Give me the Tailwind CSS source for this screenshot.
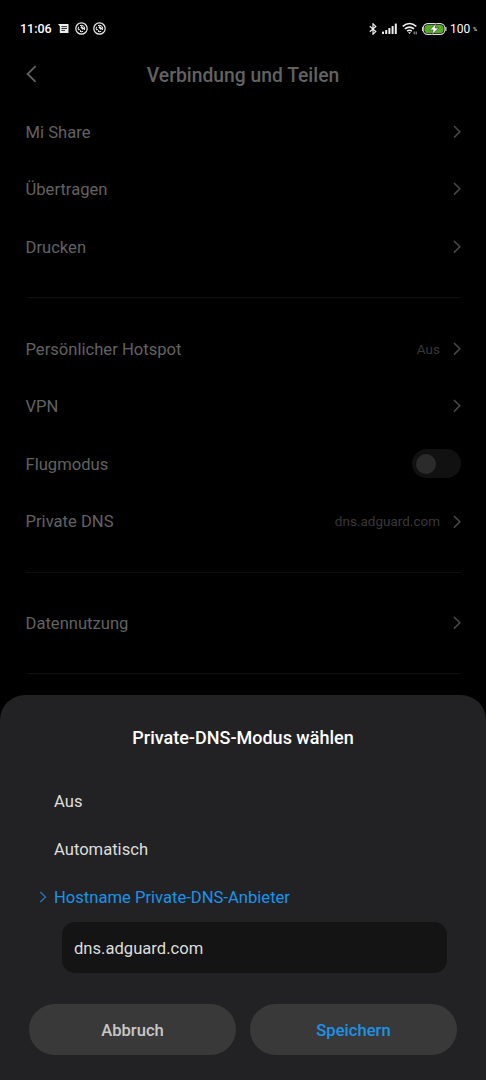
<!DOCTYPE html>
<html lang="de">
<head>
    <meta charset="UTF-8">
    <meta name="viewport" content="width=device-width, initial-scale=1.0">
    <title>Verbindung und Teilen</title>
    <script src="https://cdn.jsdelivr.net/npm/@tailwindcss/browser@4"></script>
</head>
<body class="bg-black font-['Roboto',sans-serif]">
    <div class="relative h-[1080px] w-[486px] overflow-hidden bg-black">

        <!-- Status bar -->
        <div class="flex h-[57px] items-center justify-between pl-5 pr-2 text-white">
            <div class="flex items-center">
                <span class="w-[38px] pt-[2px] text-[12.5px] font-medium leading-none">11:06</span>
                <svg class="h-[9px] w-[11px]" viewBox="0 0 11 9">
                    <path d="M0 0H10.5V9H1.8V2.2Z" fill="#eee"/>
                    <path d="M3.4 2.6H9M3.4 4.5H9M3.4 6.4H7" stroke="#000" stroke-width=".8"/>
                </svg>
                <svg class="ml-[6px] h-[13px] w-[13px]" viewBox="0 0 13 13" fill="none" stroke="#eee">
                    <circle cx="6.5" cy="6.5" r="5.7" stroke-width="1.2"/>
                    <path d="M3.6 8.2A3.3 3.3 0 0 1 3.7 4.7M5 3.6A3.3 3.3 0 0 1 9.4 8M8.2 9.3A3.3 3.3 0 0 1 5 9.4" stroke-width="1"/>
                    <path d="M6 4.6L8.6 7.2" stroke-width="2"/>
                    <path d="M3.5 6.6L6.3 9.4" stroke-width=".9"/>
                </svg>
                <svg class="ml-[5px] h-[13px] w-[13px]" viewBox="0 0 13 13" fill="none" stroke="#eee">
                    <circle cx="6.5" cy="6.5" r="5.7" stroke-width="1.2"/>
                    <path d="M3.6 8.2A3.3 3.3 0 0 1 3.7 4.7M5 3.6A3.3 3.3 0 0 1 9.4 8M8.2 9.3A3.3 3.3 0 0 1 5 9.4" stroke-width="1"/>
                    <path d="M6 4.6L8.6 7.2" stroke-width="2"/>
                    <path d="M3.5 6.6L6.3 9.4" stroke-width=".9"/>
                </svg>
            </div>
            <div class="flex items-center">
                <svg class="h-[12px] w-[8px]" viewBox="0 0 8 12" fill="none" stroke="#eee" stroke-width="1.2">
                    <path d="M.8 3.2L6.8 8.6L4 11.2V.8L6.8 3.4L.8 8.8"/>
                </svg>
                <svg class="ml-[5px] h-[11px] w-[15px]" viewBox="0 0 15 11" fill="#eee">
                    <rect x="0" y="8.5" width="2" height="2.5" rx=".5"/>
                    <rect x="3.2" y="7" width="2" height="4" rx=".5"/>
                    <rect x="6.4" y="5" width="2" height="6" rx=".5"/>
                    <rect x="9.6" y="3" width="2" height="8" rx=".5"/>
                    <rect x="12.8" y=".5" width="2" height="10.5" rx=".5"/>
                </svg>
                <svg class="ml-[5px] h-[13px] w-[16px]" viewBox="0 0 16 13" fill="none" stroke="#eee" stroke-width="1.6">
                    <path d="M.7 4.3Q7.5 -1.3 14.3 4.3M2.9 6.9Q7.5 3.2 12.1 6.9M5.1 9.2Q7.5 7.4 9.9 9.2"/>
                    <path d="M6 10.2H9L7.5 12Z" fill="#eee" stroke="none"/>
                    <path d="M12.2 9.5V12.4M14.2 9.5V12.4" stroke="#aaa" stroke-width="1"/>
                </svg>
                <svg class="ml-[4px] h-[12px] w-[25px]" viewBox="0 0 25 12">
                    <rect x="1.1" y=".6" width="21.8" height="10.8" rx="4.6" fill="#000" stroke="#ddd" stroke-width="1.1"/>
                    <path d="M.6 4V8M23.9 4V8" stroke="#ddd" stroke-width="1.2"/>
                    <rect x="2.4" y="1.9" width="19.2" height="8.2" rx="3.4" fill="#55aa25"/>
                    <path d="M14.2 .4L7.8 6.9H11.2L9.8 11.6L16.8 5H13.1Z" fill="#fff" stroke="#222" stroke-width=".5"/>
                </svg>
                <span class="ml-[3px] w-[23px] text-[12px] leading-none">100</span>
                <span class="w-[5px] pt-[3px] text-[5.5px] leading-none">%</span>
            </div>
        </div>

        <!-- Header -->
        <header class="flex h-[46px] items-start pl-[26px] pt-[5px] text-[#626262]">
            <svg class="mt-[3px] h-[18px] w-[11px]" viewBox="0 0 11 18" fill="none" stroke="currentColor" stroke-width="1.8">
                <path d="M9.6 1.2L1.6 9L9.6 16.8"/>
            </svg>
            <h1 class="w-[412px] text-center text-[19.3px] font-medium leading-[28px]">Verbindung und Teilen</h1>
        </header>

        <!-- Settings list -->
        <main class="pl-[25.5px] pr-[25px] text-[16.6px] text-[#626262]">
            <div class="flex h-[57.6px] items-center justify-between">
                <span class="pt-[3px]">Mi Share</span>
                <svg class="h-[14px] w-[8px]" viewBox="0 0 8 14" fill="none" stroke="#484848" stroke-width="1.6"><path d="M1 1L6.8 6.8L1 12.6"/></svg>
            </div>
            <div class="flex h-[57.6px] items-center justify-between">
                <span class="pt-[3px]">Übertragen</span>
                <svg class="h-[14px] w-[8px]" viewBox="0 0 8 14" fill="none" stroke="#484848" stroke-width="1.6"><path d="M1 1L6.8 6.8L1 12.6"/></svg>
            </div>
            <div class="flex h-[57.6px] items-center justify-between">
                <span class="pt-[3px]">Drucken</span>
                <svg class="h-[14px] w-[8px]" viewBox="0 0 8 14" fill="none" stroke="#484848" stroke-width="1.6"><path d="M1 1L6.8 6.8L1 12.6"/></svg>
            </div>

            <div class="flex h-[44.2px] items-center"><div class="h-px w-full bg-[#0f0f0f]"></div></div>

            <div class="flex h-[57.6px] items-center justify-between">
                <span class="pt-[3px]">Persönlicher Hotspot</span>
                <div class="flex items-center gap-[13px]">
                    <span class="text-[13.5px] text-[#383838]">Aus</span>
                    <svg class="h-[14px] w-[8px]" viewBox="0 0 8 14" fill="none" stroke="#484848" stroke-width="1.6"><path d="M1 1L6.8 6.8L1 12.6"/></svg>
                </div>
            </div>
            <div class="flex h-[57.6px] items-center justify-between">
                <span class="pt-[3px]">VPN</span>
                <svg class="h-[14px] w-[8px]" viewBox="0 0 8 14" fill="none" stroke="#484848" stroke-width="1.6"><path d="M1 1L6.8 6.8L1 12.6"/></svg>
            </div>
            <div class="flex h-[57.6px] items-center justify-between">
                <span class="pt-[3px]">Flugmodus</span>
                <div class="flex h-[29px] w-[49px] items-center rounded-full bg-[#111] pl-[4px]">
                    <div class="h-[20px] w-[20px] rounded-full bg-[#2b2b2b]"></div>
                </div>
            </div>
            <div class="flex h-[57.6px] items-center justify-between">
                <span class="pt-[2px]">Private DNS</span>
                <div class="flex items-center gap-[13px]">
                    <span class="text-[13.5px] text-[#383838]">dns.adguard.com</span>
                    <svg class="h-[14px] w-[8px]" viewBox="0 0 8 14" fill="none" stroke="#484848" stroke-width="1.6"><path d="M1 1L6.8 6.8L1 12.6"/></svg>
                </div>
            </div>

            <div class="flex h-[44.2px] items-center"><div class="h-px w-full bg-[#0f0f0f]"></div></div>

            <div class="flex h-[57.6px] items-center justify-between">
                <span class="pt-[3px]">Datennutzung</span>
                <svg class="h-[14px] w-[8px]" viewBox="0 0 8 14" fill="none" stroke="#484848" stroke-width="1.6"><path d="M1 1L6.8 6.8L1 12.6"/></svg>
            </div>

            <div class="flex h-[43px] items-center"><div class="h-px w-full bg-[#0f0f0f]"></div></div>
        </main>

        <!-- Bottom sheet -->
        <section class="absolute inset-x-0 bottom-0 h-[385px] rounded-t-[25px] bg-[#222224] text-[16.6px] text-[#dedede]">
            <h2 class="pt-[29px] text-center text-[18px] font-medium leading-[28px] text-white">Private-DNS-Modus wählen</h2>
            <ul class="mt-[26px] pl-[54px]">
                <li class="flex h-[47.7px] items-center pt-[2px]">Aus</li>
                <li class="flex h-[47.7px] items-center pt-[2px]">Automatisch</li>
                <li class="-ml-[15px] flex h-[47.7px] items-center gap-[7px] pt-[2px] text-[#1c93e8]">
                    <svg class="mb-[2px] h-[12px] w-[8px]" viewBox="0 0 8 12" fill="none" stroke="#2577b5" stroke-width="1.3"><path d="M1.3 1L6.5 6L1.3 11"/></svg>
                    Hostname Private-DNS-Anbieter
                </li>
            </ul>
            <div class="ml-[62px] mt-px flex h-[51px] w-[385px] items-center rounded-[13px] bg-[#141414] pl-[12px] pt-[3px]">dns.adguard.com</div>
            <div class="mt-[31px] flex justify-center gap-[14px]">
                <button class="h-[51px] w-[207px] rounded-full bg-[#393939] pt-[3px] font-medium text-[#c8c8c8]">Abbruch</button>
                <button class="h-[51px] w-[207px] rounded-full bg-[#393939] pt-[3px] font-medium text-[#1c93e8]">Speichern</button>
            </div>
        </section>
    </div>
</body>
</html>
